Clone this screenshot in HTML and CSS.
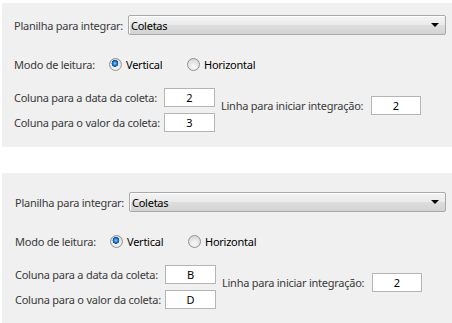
FILE: index.html
```html
<!DOCTYPE html>
<html lang="pt">
  <head>
    <meta charset="UTF-8" />
    <title>Integração de planilha</title>
    <link rel="stylesheet" href="styles.css">
  </head>
  <body>
    <div class="panel">
      <div class="row-sheet">
        <span class="label label-sheet">Planilha para integrar:</span>
        <div class="combo">
          <span class="combo-text">Coletas</span>
          <span class="combo-arrow"></span>
        </div>
      </div>

      <div class="row-mode">
        <span class="label label-mode">Modo de leitura:</span>
        <span class="option option-first">
          <span class="radio checked"></span>
          <span class="option-text">Vertical</span>
        </span>
        <span class="option">
          <span class="radio"></span>
          <span class="option-text">Horizontal</span>
        </span>
      </div>

      <div class="row-columns">
        <div class="columns">
          <div class="field">
            <span class="label label-col">Coluna para a data da coleta:</span>
            <input class="box" type="text" value="2" />
          </div>
          <div class="field">
            <span class="label label-col">Coluna para o valor da coleta:</span>
            <input class="box" type="text" value="3" />
          </div>
        </div>
        <div class="field field-start">
          <span class="label label-start">Linha para iniciar integração:</span>
          <input class="box" type="text" value="2" />
        </div>
      </div>
    </div>

    <div class="panel panel-second">
      <div class="row-sheet">
        <span class="label label-sheet">Planilha para integrar:</span>
        <div class="combo">
          <span class="combo-text">Coletas</span>
          <span class="combo-arrow"></span>
        </div>
      </div>

      <div class="row-mode">
        <span class="label label-mode">Modo de leitura:</span>
        <span class="option option-first">
          <span class="radio checked"></span>
          <span class="option-text">Vertical</span>
        </span>
        <span class="option">
          <span class="radio"></span>
          <span class="option-text">Horizontal</span>
        </span>
      </div>

      <div class="row-columns">
        <div class="columns">
          <div class="field">
            <span class="label label-col">Coluna para a data da coleta:</span>
            <input class="box" type="text" value="B" />
          </div>
          <div class="field">
            <span class="label label-col">Coluna para o valor da coleta:</span>
            <input class="box" type="text" value="D" />
          </div>
        </div>
        <div class="field field-start">
          <span class="label label-start">Linha para iniciar integração:</span>
          <input class="box" type="text" value="2" />
        </div>
      </div>
    </div>
  </body>
</html>
```

FILE: styles.css
```css
body {
  margin: 0;
  background-color: #ffffff;
  font-family: "Noto Sans", "Open Sans", sans-serif;
  font-size: 11px;
  letter-spacing: -0.25px;
  color: #000000;
}

.panel {
  background-color: #f0f0f0;
  margin: 3px 0 0 2px;
  height: 144px;
  padding: 12px 6px 0 12px;
  box-sizing: border-box;
}

.panel-second {
  margin-top: 26px;
  height: 150px;
  padding: 19px 6px 0 13px;
}

.label {
  color: #3a3a3a;
  white-space: nowrap;
}

/* linha da planilha */
.row-sheet {
  display: flex;
  align-items: center;
  height: 20px;
}

.label-sheet {
  width: 114px;
}

.combo {
  flex: 1;
  display: flex;
  align-items: center;
  height: 20px;
  box-sizing: border-box;
  border: 1px solid #a9a9a9;
  border-radius: 2px;
  padding: 0 6px 0 2px;
  background: linear-gradient(#f3f3f3, #ebebeb 50%, #dedede 50%, #d3d3d3);
  box-shadow: inset 1px 1px 0 #ffffff;
}

.combo-text {
  flex: 1;
  color: #000000;
}

.combo-arrow {
  width: 0;
  height: 0;
  border-left: 4px solid transparent;
  border-right: 4px solid transparent;
  border-top: 4px solid #000000;
}

/* modo de leitura */
.row-mode {
  display: flex;
  align-items: center;
  height: 14px;
  margin-top: 22px;
}

.label-mode {
  width: 95px;
}

.option {
  display: flex;
  align-items: center;
}

.option-first {
  width: 78px;
}

.radio {
  width: 13px;
  height: 13px;
  box-sizing: border-box;
  border-radius: 50%;
  border: 1px solid #939393;
  background: radial-gradient(circle at 50% 70%, #fafafa, #dcdcdc 70%, #c9c9c9);
  margin-right: 4px;
}

.radio.checked {
  background:
    radial-gradient(circle at 45% 40%, #8fd3ff 0, #2a8ad8 1.6px, #0c4f9a 3.2px, transparent 3.6px),
    radial-gradient(circle at 50% 70%, #fafafa, #dcdcdc 70%, #c9c9c9);
}

/* colunas */
.row-columns {
  display: flex;
  margin-top: 17px;
}

.columns {
  display: flex;
  flex-direction: column;
  gap: 6px;
}

.field {
  display: flex;
  align-items: center;
}

.label-col {
  width: 150px;
}

.field-start {
  align-self: flex-start;
  margin: 8px 0 0 6px;
}

.label-start {
  width: 150px;
}

.box {
  width: 51px;
  height: 19px;
  box-sizing: border-box;
  border: 1px solid #b5b5b5;
  background-color: #ffffff;
  font: inherit;
  color: #000000;
  text-align: center;
  padding: 0;
  margin: 0;
}

.field-start .box {
  width: 50px;
}
```
